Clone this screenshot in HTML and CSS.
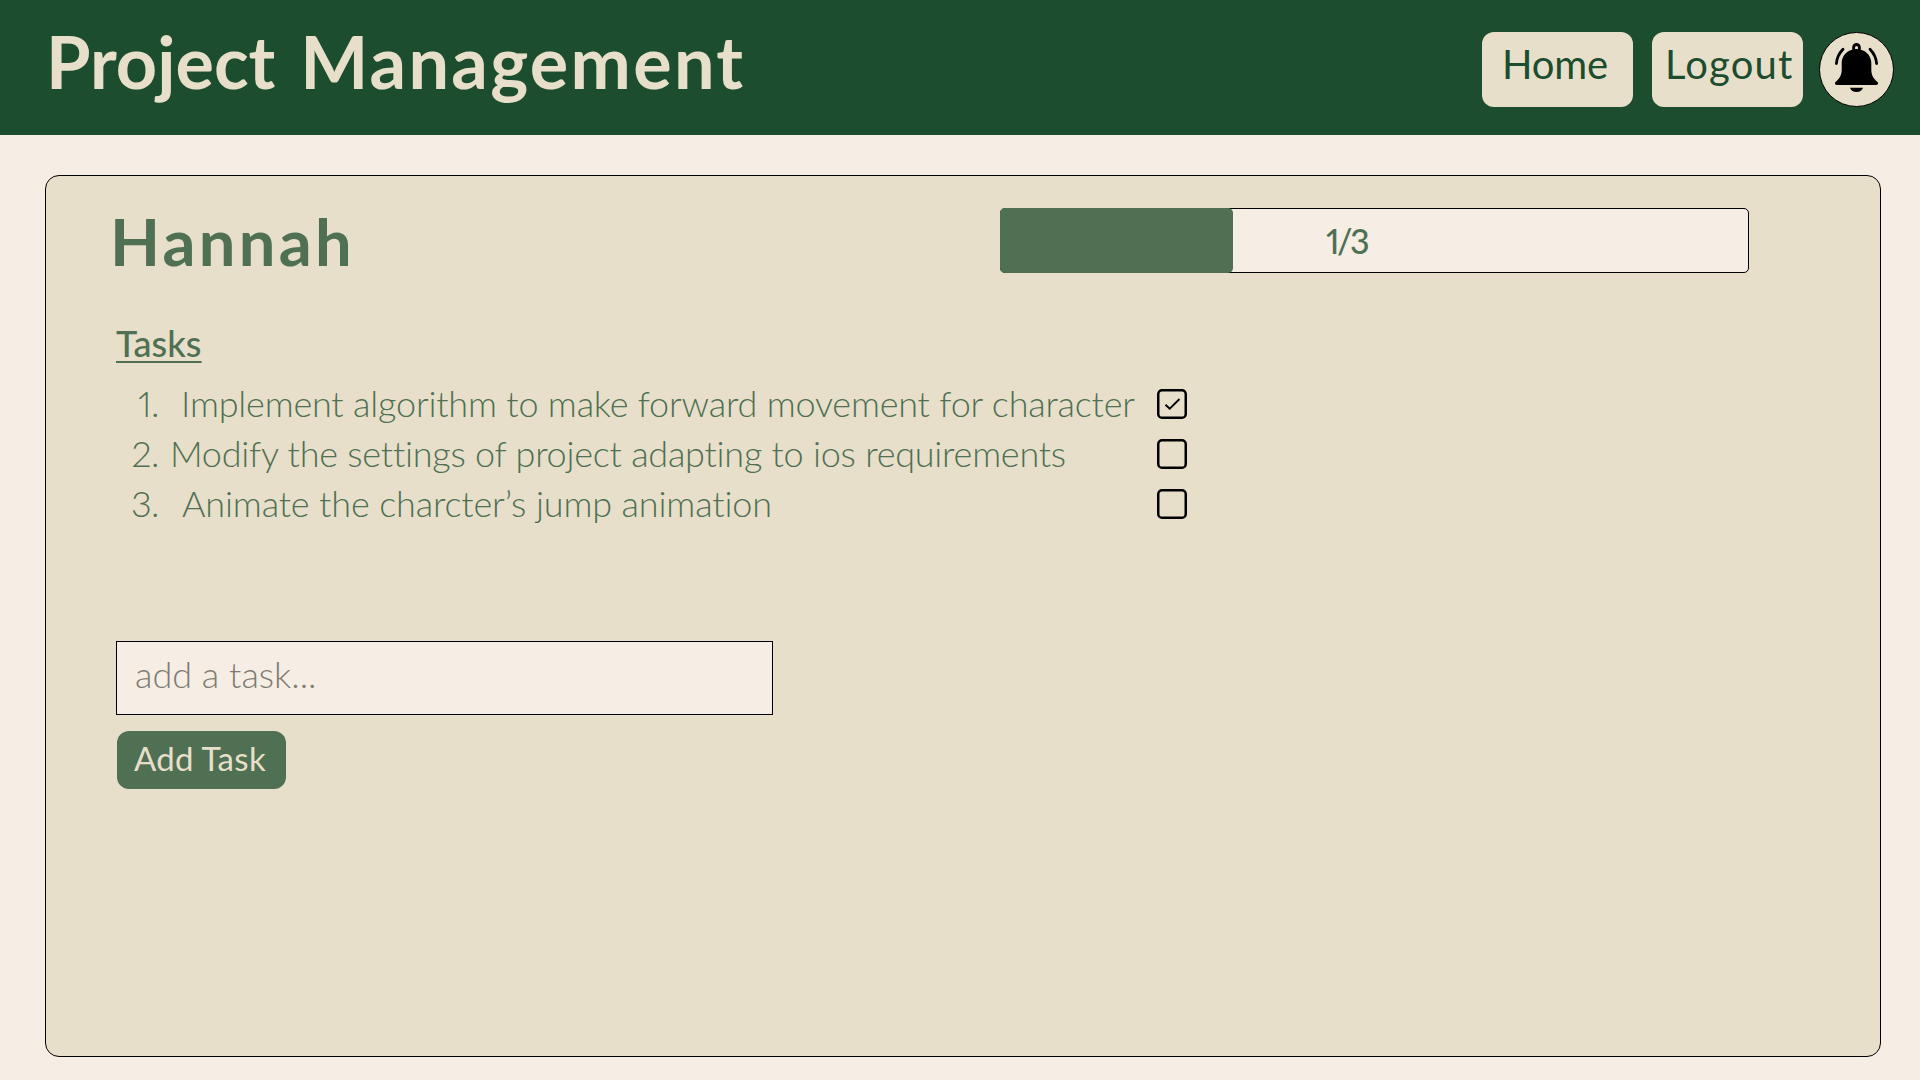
FILE: index.html
```
<!DOCTYPE html>
<html lang="en">
<head>
<meta charset="utf-8">
<title>Project Management</title>
<link rel="stylesheet" href="styles.css">
</head>
<body>
<header class="topbar">
  <h1 class="brand"><span>Project</span> Management</h1>
  <nav class="nav">
    <a class="nav-link nav-home">Home</a>
    <a class="nav-link nav-logout">Logout</a>
    <button class="bell" aria-label="Notifications">
      <svg viewBox="1 1 73 73" width="73" height="73">
        <path fill-rule="evenodd" d="M33.2 17.8V15.2a4.3 4.3 0 0 1 8.6 0v2.6C48 19.4 52.3 24.6 52.3 31v6.5c0 5.8 2 8.6 6.2 12.6 1.1 1.2.6 2.9-1.2 2.9H17.700c-1.800 0-2.300-1.700-1.200-2.900C20.700 46.100 22.700 43.300 22.700 37.500V31c0-6.400 4.300-11.600 10.500-13.200ZM36 16.900h3v-1.500a1.500 1.500 0 0 0-3 0Z"/>
        <path d="M31 55.700h13c-.8 2.800-3.300 4.300-6.500 4.300S31.800 58.500 31 55.700Z"/>
        <path class="ring" d="M24 17.300Q18 23.500 17.400 31.500M51 17.300Q57 23.500 57.600 31.500"/>
      </svg>
    </button>
  </nav>
</header>
<main class="card">
  <div class="card-head">
    <h2 class="member">Hannah</h2>
    <div class="progress">
      <div class="progress-fill" style="width:233px"></div>
      <span class="progress-label">1/3</span>
    </div>
  </div>
  <h3 class="tasks-title">Tasks</h3>
  <ol class="tasks">
    <li class="task">
      <span class="num">1.</span>
      <span class="text">Implement algorithm to make forward movement for character</span>
      <svg class="check" viewBox="0 0 30 30"><rect x="1.250" y="1.250" width="27.500" height="27.500" rx="3.800"/><path d="M8.500 15.700 12.700 19.700 22.500 10"/></svg>
    </li>
    <li class="task">
      <span class="num">2.</span>
      <span class="text text-near">Modify the settings of project adapting to ios requirements</span>
      <svg class="check" viewBox="0 0 30 30"><rect x="1.250" y="1.250" width="27.500" height="27.500" rx="3.800"/></svg>
    </li>
    <li class="task">
      <span class="num">3.</span>
      <span class="text text-far">Animate the charcter’s jump animation</span>
      <svg class="check" viewBox="0 0 30 30"><rect x="1.250" y="1.250" width="27.500" height="27.500" rx="3.800"/></svg>
    </li>
  </ol>
  <form class="add-form">
    <input class="add-input" type="text" placeholder="add a task...">
    <button class="add-button" type="button">Add Task</button>
  </form>
</main>
</body>
</html>
```

FILE: styles.css
```
* { box-sizing: border-box; margin: 0; padding: 0; }

body {
  min-height: 1080px;
  background: #f6eee4;
  font-family: Lato, "Liberation Sans", sans-serif;
  color: #4f7052;
}

.topbar {
  display: flex;
  justify-content: space-between;
  align-items: flex-start;
  height: 135px;
  padding: 25px 26px 0 46px;
  background: #1c4d2e;
}

.brand {
  font-size: 72px;
  line-height: 72px;
  font-weight: 700;
  letter-spacing: 2.3px;
  word-spacing: 5px;
  color: #e7dfca;
}

.brand span { letter-spacing: 0; }

.nav { display: flex; padding-top: 7px; }

.nav-link {
  width: 151px;
  height: 75px;
  margin-right: 19px;
  border-radius: 12px;
  background: #e7dfca;
  color: #1c4d2e;
  font-size: 40px;
  line-height: 65px;
}

.nav-home { padding-left: 20px; letter-spacing: -0.2px; }
.nav-logout { padding-left: 13px; margin-right: 16px; letter-spacing: 1.18px; }

.bell {
  width: 75px;
  height: 75px;
  border: 1px solid #000;
  border-radius: 50%;
  background: #e7dfca;
}

.bell svg { display: block; }

.ring { fill: none; stroke: #000; stroke-width: 2.8; stroke-linecap: round; }

.card {
  height: 882px;
  margin: 40px 39px 0 45px;
  padding: 32px 131px 0 64px;
  border: 1px solid #000;
  border-radius: 14px;
  background: #e7dfca;
}

.card-head { display: flex; justify-content: space-between; height: 65px; }

.member {
  padding-top: 1px;
  font-size: 65px;
  line-height: 65px;
  font-weight: 700;
  letter-spacing: 3.3px;
}

.progress {
  display: flex;
  width: 749px;
  height: 65px;
  border: 1px solid #000;
  border-radius: 5px;
  background: #f6eee4;
}

.progress-fill { margin: -1px; border-radius: 5px; background: #4f7052; }

.progress-label {
  padding-left: 94px;
  font-size: 34px;
  line-height: 64px;
  font-weight: 500;
  font-variant-numeric: proportional-nums;
  letter-spacing: -2.5px;
}

.tasks-title {
  width: max-content;
  margin: 52px 0 17px 6px;
  font-size: 36px;
  line-height: 36px;
  font-weight: 500;
  letter-spacing: 0.1px;
  text-decoration: underline 2px;
  text-underline-offset: 4px;
  text-decoration-skip-ink: none;
}

.tasks { list-style: none; font-size: 36px; font-weight: 300; }

.task {
  display: grid;
  grid-template-columns: 49px 998px 30px;
  height: 50px;
  line-height: 50px;
}

.num { text-align: right; font-variant-numeric: proportional-nums; letter-spacing: -0.5px; }

.text { padding-left: 22px; letter-spacing: -0.2px; white-space: nowrap; }
.text-near { padding-left: 11px; letter-spacing: -0.24px; }
.text-far { padding-left: 23px; letter-spacing: -0.15px; }

.check {
  width: 30px;
  height: 30px;
  margin-top: 11px;
  fill: none;
  stroke: #000;
  stroke-width: 2.5;
}

.check path { stroke-width: 1.9; }

.add-form {
  display: flex;
  flex-direction: column;
  align-items: flex-start;
  gap: 16px;
  margin-top: 113px;
  padding-left: 6px;
}

.add-input {
  width: 657px;
  height: 74px;
  padding: 0 18px 8px;
  border: 1px solid #000;
  background: #f6eee4;
  font: 300 36px Lato, "Liberation Sans", sans-serif;
}

.add-input::placeholder { color: #7f7b72; opacity: 1; }

.add-button {
  width: 169px;
  height: 58px;
  margin-left: 1px;
  padding: 0 0 5px 17px;
  border: 0;
  border-radius: 12px;
  background: #4f7052;
  color: #e7dfca;
  font: 400 33px Lato, "Liberation Sans", sans-serif;
  letter-spacing: 0.3px;
  text-align: left;
}
```
